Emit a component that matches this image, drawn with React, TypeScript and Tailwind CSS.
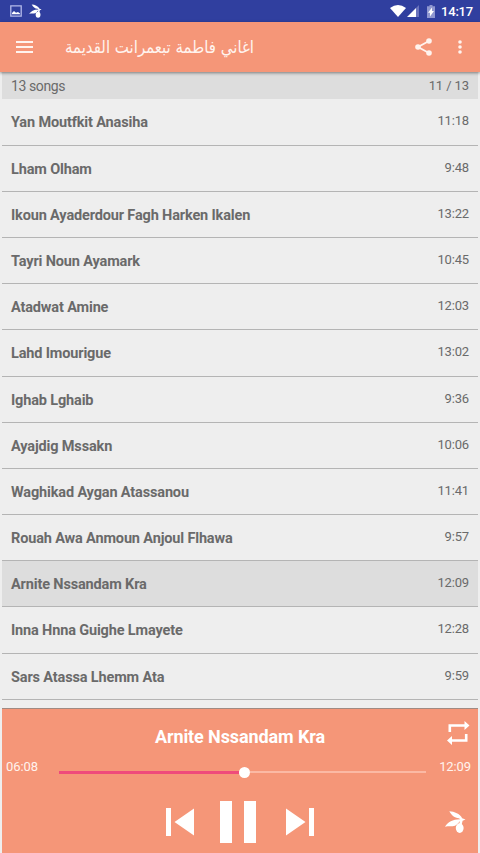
import React from "react";

const songs: [string, string][] = [
  ["Yan Moutfkit Anasiha", "11:18"],
  ["Lham Olham", "9:48"],
  ["Ikoun Ayaderdour Fagh Harken Ikalen", "13:22"],
  ["Tayri Noun Ayamark", "10:45"],
  ["Atadwat Amine", "12:03"],
  ["Lahd Imourigue", "13:02"],
  ["Ighab Lghaib", "9:36"],
  ["Ayajdig Mssakn", "10:06"],
  ["Waghikad Aygan Atassanou", "11:41"],
  ["Rouah Awa Anmoun Anjoul Flhawa", "9:57"],
  ["Arnite Nssandam Kra", "12:09"],
  ["Inna Hnna Guighe Lmayete", "12:28"],
  ["Sars Atassa Lhemm Ata", "9:59"],
];

function Olive({ className }: { className: string }) {
  return (
    <svg viewBox="0 0 22 24" className={className} fill="currentColor">
      <path d="M4.500 .8C10 1 15.500 3.500 18 8L21.500 9.500L18.500 10.800L14.500 8.200C10 7.800 7 5 4.500 .8Z" />
      <path d="M0 17C3.500 11.800 8.500 8.800 17.500 9.300C14.500 11.500 13.500 14.500 10.500 15.800C7.500 17 3.500 15.800 0 17Z" />
      <path d="M16 8.500L18.800 9.500L17.300 15.500H14.800Z" />
      <ellipse cx="15.400" cy="18.400" rx="4.100" ry="5" />
    </svg>
  );
}

function StatusBar() {
  return (
    <div className="flex h-[22px] items-center bg-[#303f9f] pr-[7px] pl-[10px] text-white">
      <svg viewBox="0 0 12 12" className="h-3 w-3 text-[#b4baea]">
        <path fill="none" stroke="currentColor" strokeWidth="1.3" d="M.8.8h10.4v10.4H.8z" />
        <path fill="#fff" d="M2 9.3V8l2-2 2 1.700L8 7l2 1.500v.8z" />
      </svg>
      <Olive className="ml-[7px] h-[14px] w-[13px]" />
      <div className="flex-1" />
      <svg viewBox="0 0 16 12" className="h-3 w-4" fill="currentColor">
        <path d="M0 3Q8-3 16 3L8 12Z" />
      </svg>
      <svg viewBox="0 0 12 12" className="ml-px h-3 w-3">
        <path fill="#fff" d="M0 12L9 3V12Z" />
        <path fill="#6a73bd" d="M9 3L12 0V12H9Z" />
      </svg>
      <svg viewBox="0 0 8 13" className="ml-[8px] h-[13px] w-2">
        <path fill="#8f97d0" d="M2.500 0h3v1.300H8V13H0V1.300h2.500z" />
        <path fill="#fff" d="M1 7.700L5 2.500V6h2L3 11.500V7.700z" />
      </svg>
      <span className="ml-[6px] w-[32px] pt-px text-[13px] leading-[22px] font-medium tracking-[-0.2px] whitespace-nowrap">14:17</span>
    </div>
  );
}

function Toolbar() {
  return (
    <header className="relative z-10 flex h-[50px] items-center bg-[#f59678] pr-[18px] pl-[16px] text-[#fff3ee] shadow-[0_1px_3px_rgba(0,0,0,0.45)]">
      <svg viewBox="0 0 17 12" className="h-3 w-[17px]" fill="currentColor">
        <path d="M0 0h17v2H0zM0 5h17v2H0zM0 10h17v2H0z" />
      </svg>
      <h1 dir="rtl" className="ml-[31px] w-[190px] origin-center scale-y-[1.15] text-right font-['DejaVu_Sans',sans-serif] text-[15px] leading-[24px] font-normal whitespace-nowrap">
        اغاني فاطمة تبعمرانت القديمة
      </h1>
      <div className="flex-1" />
      <svg viewBox="0 0 17 18" className="h-[18px] w-[17px]" fill="currentColor">
        <path fill="none" stroke="currentColor" strokeWidth="1.8" d="M14 3L3 9L14 15" />
        <circle cx="14" cy="3" r="2.800" />
        <circle cx="3" cy="9" r="2.800" />
        <circle cx="14" cy="15" r="2.800" />
      </svg>
      <svg viewBox="0 0 4 14" className="ml-[26px] h-[14px] w-[4px]" fill="currentColor">
        <circle cx="2" cy="2" r="1.800" />
        <circle cx="2" cy="7" r="1.800" />
        <circle cx="2" cy="12" r="1.800" />
      </svg>
    </header>
  );
}

function Player() {
  return (
    <footer className="mx-[2px] h-[145px] shrink-0 border-t border-[#a08a82] bg-[#f59678] text-white">
      <div className="flex h-[46px] items-start">
        <h2 className="w-full pt-[16px] text-center text-[18px] leading-[24px] font-bold tracking-[-0.1px]">Arnite Nssandam Kra</h2>
        <svg viewBox="0 0 24 24" className="mt-[12px] mr-[8px] -ml-[32px] h-[24px] w-[24px] shrink-0" fill="currentColor">
          <path d="M2.500 3.200h16V0L23.500 4.500 18.500 9V5.800H5.100V11H2.500zM21.500 20.800H6V24L1 19.500 6 15v3.200h12.900V13h2.600z" />
        </svg>
      </div>
      <div className="flex h-[32px] items-start text-[13px] tracking-[-0.1px] text-[#fff3ee]">
        <span className="mt-[4px] w-[57px] pl-[4px] leading-[16px]">06:08</span>
        <div className="flex h-[34px] w-[367px] items-center">
          <div className="h-[3px] w-[180px] bg-[#ef4b7b]" />
          <div className="h-[11px] w-[11px] rounded-full bg-white" />
          <div className="h-[2px] flex-1 bg-[#fbb9a4]" />
        </div>
        <span className="mt-[4px] flex-1 pr-[7px] text-right leading-[16px]">12:09</span>
      </div>
      <div className="flex h-[66px] items-center pt-[3px] pl-[164px]">
        <svg viewBox="0 0 28 28" className="h-[28px] w-[28px]" fill="currentColor">
          <path d="M0 0h5v28H0zM28 .5v27L8.500 14z" />
        </svg>
        <svg viewBox="0 0 36 42" className="ml-[26px] h-[42px] w-[36px]" fill="currentColor">
          <path d="M0 0h12v42H0zM24 0h12v42H24z" />
        </svg>
        <svg viewBox="0 0 28 28" className="ml-[30px] h-[28px] w-[28px]" fill="currentColor">
          <path d="M0 .5L19.500 14 0 27.500zM23 0h5v28h-5z" />
        </svg>
        <Olive className="ml-[131px] h-[24px] w-[21px]" />
      </div>
    </footer>
  );
}

export default function App() {
  return (
    <div className="flex h-[853px] w-[480px] flex-col overflow-hidden bg-[#eeeeee] font-['Roboto',sans-serif]">
      <StatusBar />
      <Toolbar />
      <div className="mx-[2px] flex h-[27px] justify-between bg-[#dddddd] px-[9px] text-[#6a6a6a]">
        <span className="text-[14px] leading-[28px] tracking-[-0.4px]">13 songs</span>
        <span className="text-[13px] leading-[28px] tracking-[-0.1px]">11 / 13</span>
      </div>
      <main className="mx-[2px] flex-1 overflow-hidden pt-[0.4px]">
        {songs.map(([title, time], i) => (
          <div key={title} className={`flex h-[46.2px] justify-between border-b border-[#b4b4b4] px-[9px] text-[#6a6a6a] ${i === 10 ? "bg-[#dddddd]" : ""}`}>
            <span className="text-[14.5px] leading-[48px] font-bold tracking-[-0.15px]">{title}</span>
            <span className="text-[13px] leading-[44px] tracking-[-0.15px]">{time}</span>
          </div>
        ))}
      </main>
      <Player />
    </div>
  );
}
